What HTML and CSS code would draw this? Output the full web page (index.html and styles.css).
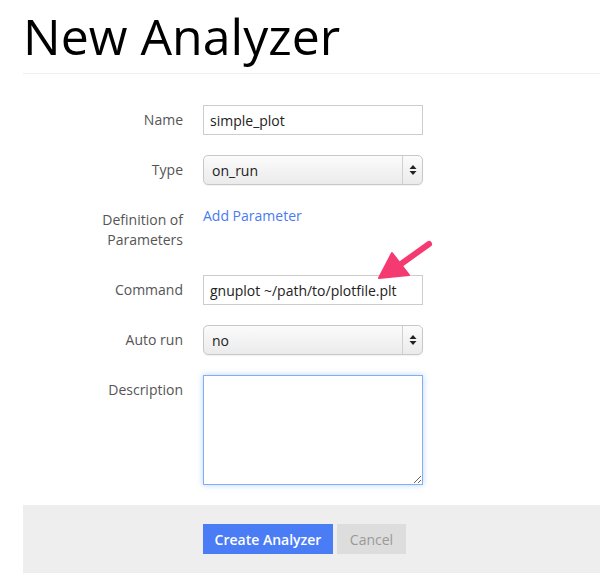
FILE: index.html
```html
<!DOCTYPE html>
<html>
<head>
<meta charset="utf-8">
<link rel="stylesheet" href="styles.css">
</head>
<body>
<div class="page">
  <h1 class="title">New Analyzer</h1>
  <form class="form">
    <div class="row">
      <label class="label">Name</label>
      <div class="control"><input class="input" type="text" value="simple_plot"></div>
    </div>
    <div class="row">
      <label class="label">Type</label>
      <div class="control">
        <div class="select"><span class="select-text">on_run</span><span class="select-btn"><svg width="8" height="12" viewBox="0 0 8 12"><path d="M4 1 L7.5 5 H0.5 Z M4 11 L7.5 7 H0.5 Z" fill="#222"/></svg></span></div>
      </div>
    </div>
    <div class="row row-def">
      <label class="label">Definition of<br>Parameters</label>
      <div class="control"><a class="link" href="#">Add Parameter</a></div>
    </div>
    <div class="row">
      <label class="label">Command</label>
      <div class="control cmd">
        <input class="input" type="text" value="gnuplot ~/path/to/plotfile.plt">
        <svg class="arrow" width="70" height="60" viewBox="0 0 70 60">
          <path d="M56 6 L28 26" stroke="#f53a72" stroke-width="6" stroke-linecap="round" fill="none"/>
          <path d="M19 15 L6 40 L36 37 Z" fill="#f53a72" stroke="#f53a72" stroke-width="2" stroke-linejoin="round"/>
        </svg>
      </div>
    </div>
    <div class="row">
      <label class="label">Auto run</label>
      <div class="control">
        <div class="select"><span class="select-text">no</span><span class="select-btn"><svg width="8" height="12" viewBox="0 0 8 12"><path d="M4 1 L7.5 5 H0.5 Z M4 11 L7.5 7 H0.5 Z" fill="#222"/></svg></span></div>
      </div>
    </div>
    <div class="row">
      <label class="label">Description</label>
      <div class="control"><textarea class="textarea"></textarea></div>
    </div>
    <div class="actions">
      <button class="btn btn-primary" type="button">Create Analyzer</button>
      <button class="btn btn-cancel" type="button">Cancel</button>
    </div>
  </form>
</div>
</body>
</html>
```
FILE: styles.css
```css
html, body {
  margin: 0;
  padding: 0;
  background: #fff;
}
body {
  font-family: "Open Sans", "Liberation Sans", sans-serif;
  font-size: 14px;
  color: #333;
}
.page {
  padding-left: 23px;
}
.title {
  margin: 0;
  padding: 5px 0 0 0;
  height: 68px;
  font-family: "Open Sans", "Liberation Sans", sans-serif;
  font-size: 50px;
  font-weight: 400;
  line-height: 62px;
  color: #000;
  border-bottom: 1px solid #eee;
}
.form {
  padding-top: 31px;
}
.row {
  display: flex;
  gap: 20px;
  margin-bottom: 20px;
}
.row-def {
  height: 50px;
}
.label {
  width: 160px;
  text-align: right;
  padding-top: 5px;
  line-height: 20px;
  color: #555;
  flex-shrink: 0;
}
.control {
  width: 220px;
}
.cmd {
  position: relative;
}
.input {
  box-sizing: border-box;
  width: 220px;
  height: 30px;
  border: 1px solid #ccc;
  padding: 0 6px;
  font-family: "Open Sans", "Liberation Sans", sans-serif;
  font-size: 14px;
  color: #222;
  background: #fff;
  outline: none;
  margin: 0;
}
.select {
  box-sizing: border-box;
  width: 220px;
  height: 30px;
  border: 1px solid #c8c8c8;
  border-radius: 5px;
  background: linear-gradient(#fbfbfb, #ebebeb);
  display: flex;
  align-items: center;
  box-shadow: 0 1px 1px rgba(0,0,0,0.06);
}
.select-text {
  flex: 1;
  padding-left: 8px;
  color: #222;
}
.select-btn {
  width: 19px;
  height: 28px;
  border-left: 1px solid #d0d0d0;
  display: flex;
  align-items: center;
  justify-content: center;
}
.link {
  color: #4a7af4;
  text-decoration: none;
  line-height: 20px;
  display: block;
  margin-top: 1px;
}
.arrow {
  position: absolute;
  left: 170px;
  top: -37px;
}
.textarea {
  box-sizing: border-box;
  display: block;
  width: 220px;
  height: 110px;
  border: 1px solid #7eb0f3;
  box-shadow: 0 0 6px rgba(100, 160, 240, 0.45);
  outline: none;
  margin: 0;
  resize: both;
}
.actions {
  background: #eee;
  height: 68px;
  box-sizing: border-box;
  padding: 19px 0 0 180px;
  display: flex;
  gap: 4px;
  align-items: flex-start;
}
.btn {
  height: 30px;
  border: none;
  margin: 0;
  font-family: "Open Sans", "Liberation Sans", sans-serif;
  font-size: 14px;
  padding: 0;
  white-space: nowrap;
}
.btn-primary {
  background: #4a7cf6;
  color: #fff;
  width: 130px;
  font-weight: 600;
}
.btn-cancel {
  background: #ddd;
  color: #999;
  width: 69px;
}
```
